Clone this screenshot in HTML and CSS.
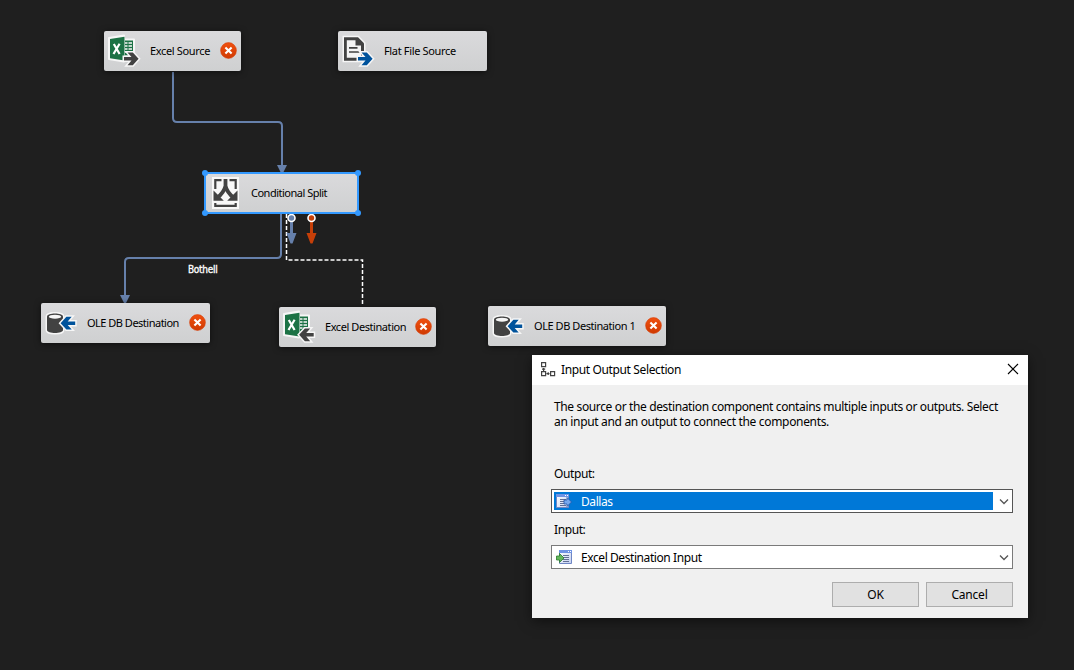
FILE: index.html
```html
<!DOCTYPE html>
<html lang="en">
<head>
<meta charset="utf-8">
<title>Data Flow</title>
<link rel="stylesheet" href="styles.css">
</head>
<body>
<svg class="defs" width="0" height="0">
  <defs>
    <linearGradient id="err" x1="0" y1="0" x2="0" y2="1"><stop offset="0" stop-color="#f0500f"/><stop offset="1" stop-color="#cf3a02"/></linearGradient>
    <linearGradient id="paper" x1="0" y1="0" x2="1" y2="1"><stop offset="0" stop-color="#fff"/><stop offset="1" stop-color="#c3d0f0"/></linearGradient>
    <g id="excel">
      <path d="M5 7 20 4.500V8.500H30V25H20V30.500L5 28Z" fill="#f6f6f6" stroke="#f6f6f6" stroke-width="2" stroke-linejoin="round"/>
      <path d="M6 8 20.500 5.700V29.500L6 27.200Z" fill="#1c7245"/>
      <path d="M21 9.500h8v15h-8" fill="#1c7245"/>
      <path d="M21 12h2.500M24.500 12H28M21 15h2.500M24.500 15H28M21 18h2.500M24.500 18H28M21 21h2.500M24.500 21H28" stroke="#f6f6f6" stroke-width="1.700"/>
      <path d="M9.800 13 15.600 23M15.600 12.700 9.500 23" stroke="#fff" stroke-width="2.200" fill="none"/>
    </g>
    <path id="arrow-r" d="M20 26H27.500L23.500 21.400H28.800L34.600 27.800 28.800 34.200H23.500L27.500 29.600H20Z" stroke-width="3" paint-order="stroke" stroke="#f6f6f6"/>
    <path id="arrow-l" d="M34.200 26H26.700L30.700 21.400H25.400L19.600 27.800 25.400 34.200H30.700L26.700 29.600H34.200Z" stroke-width="3" paint-order="stroke" stroke="#f6f6f6"/>
    <g id="database">
      <path d="M6 13.500C6 9.500 22 9.500 22 13.500V27C22 31 6 31 6 27Z" fill="#424242" stroke="#f6f6f6" stroke-width="3" paint-order="stroke"/>
      <ellipse cx="14" cy="13.700" rx="6.200" ry="2" fill="#f6f6f6"/>
      <use href="#arrow-l" y="-7.600" fill="#00539c"/>
    </g>
    <g id="error"><circle cx="8.500" cy="8.500" r="7.900" fill="url(#err)" stroke="#d9420e" stroke-width=".6"/><path d="m5.400 5.400 6.200 6.200m0-6.200-6.200 6.200" stroke="#fff" stroke-width="2.100"/></g>
    <path id="chevron" d="m1 1.500 4 4 4-4" fill="none" stroke="#555" stroke-width="1.300"/>
    <g id="form">
      <path d="M.5.500h12v13H.5Z" fill="url(#paper)" stroke="#6f86c4"/>
      <path d="M0 0h13v3H0Z" fill="#6f93e4"/><path d="M9 1h1v1H9zM11 1h1v1h-1z" fill="#fff"/>
      <path d="M4 5.500h6M4 7.500h6M4 9.500h6M4 11.500h6" stroke="#55628a" stroke-width=".9"/>
    </g>
  </defs>
</svg>

<main class="canvas">
  <svg class="wires" width="1074" height="670">
    <g fill="none" stroke="#6680ab" stroke-width="2">
      <path d="M173 72V118Q173 122 177 122H278Q282 122 282 126V166"/>
      <path d="M281 213V254Q281 258 277 258H129Q125 258 125 262V296"/>
    </g>
    <path d="M277 165h10l-4 8h-2zM120 295h10l-4 8h-2z" fill="#6680ab"/>
    <path d="M286.500 214V260H362.500V305" fill="none" stroke="#fff" stroke-width="1.500" stroke-dasharray="4 2"/>
    <path d="M290 218h3v15h3.500l-4 10.500h-2l-4-10.500h3.500z" fill="#6680ab"/>
    <path d="M310 218h3v15h3.500l-4 10.500h-2l-4-10.500h3.500z" fill="#c63f08"/>
    <circle cx="291.500" cy="218" r="3.500" fill="#6680ab" stroke="#fff" stroke-width="1.600"/>
    <circle cx="311.500" cy="218" r="3.500" fill="#c63f08" stroke="#fff" stroke-width="1.600"/>
  </svg>
  <span class="wire-label">Bothell</span>

  <div class="node excel-source">
    <svg class="icon" width="40" height="40"><use href="#excel"/><use href="#arrow-r" fill="#424242"/></svg>
    <span class="name">Excel Source</span>
    <svg class="status" width="17" height="17"><use href="#error"/></svg>
  </div>
  <div class="node flat-source">
    <svg class="icon" width="40" height="40">
      <path d="M6 6.300H20L26 12.300V29.700H6Z" fill="#424242" stroke="#f6f6f6" stroke-width="3" paint-order="stroke"/>
      <path d="M8.800 9.200H17.500V14.500H23V26.800H8.800Z" fill="#f4f4f4"/>
      <path d="M11 16.800h8.500M11 21h10.500" stroke="#424242" stroke-width="1.700"/>
      <use href="#arrow-r" fill="#00539c"/>
    </svg>
    <span class="name">Flat File Source</span>
  </div>
  <div class="node split">
    <svg class="icon" width="40" height="40">
      <path d="M7 4h27v32H7Z" fill="#f8f8f8"/>
      <path d="M10.300 16V7.200H16.500M24.500 7.200H30.700V16M10.300 30V32.800H30.700V30" fill="none" stroke="#424242" stroke-width="2.200"/>
      <path d="M20.500 6V13Q19 19.500 12 25M20.500 13Q22 19.500 29 25" fill="none" stroke="#424242" stroke-width="3.800"/>
      <path d="M8.500 17.500 18.800 27.800H8.500ZM32.500 17.500 22.200 27.800H32.500Z" fill="#424242"/>
    </svg>
    <span class="name">Conditional Split</span>
    <i class="grip tl"></i><i class="grip tr"></i><i class="grip bl"></i><i class="grip br"></i>
  </div>
  <div class="node ole-one">
    <svg class="icon" width="40" height="40"><use href="#database"/></svg>
    <span class="name">OLE DB Destination</span>
    <svg class="status" width="17" height="17"><use href="#error"/></svg>
  </div>
  <div class="node excel-dest">
    <svg class="icon" width="40" height="40"><use href="#excel"/><use href="#arrow-l" x=".5" fill="#424242"/></svg>
    <span class="name">Excel Destination</span>
    <svg class="status" width="17" height="17"><use href="#error"/></svg>
  </div>
  <div class="node ole-two">
    <svg class="icon" width="40" height="40"><use href="#database"/></svg>
    <span class="name">OLE DB Destination 1</span>
    <svg class="status" width="17" height="17"><use href="#error"/></svg>
  </div>

  <section class="dialog">
    <header class="titlebar">
      <svg width="16" height="16" fill="none" stroke="#424242" stroke-width="1.200"><path d="M1.600 1.600h4v4h-4zM1.600 10.600h4v4h-4zM10.600 10.600h4v4h-4zM3.600 7v3.500M2 8.200h3.200M6.500 12.600h3M8.200 11.200v2.800"/></svg>
      <h1>Input Output Selection</h1>
      <svg width="12" height="12" class="close"><path d="m1 1 10 10M11 1 1 11" stroke="#000" stroke-width="1.100"/></svg>
    </header>
    <div class="content">
      <p class="message"><span class="line-one">The source or the destination component contains multiple inputs or outputs. Select</span><br><span class="line-two">an input and an output to connect the components.</span></p>
      <label class="label">Output:</label>
      <div class="combo active">
        <div class="value">
          <svg width="17" height="15"><use href="#form"/><path d="M8 6h3V3.500L15.500 8 11 12.500V10H8z" fill="#78a9ef" stroke="#2454a5" stroke-width=".8"/></svg>
          <span class="dallas">Dallas</span>
        </div>
        <svg class="drop" width="10" height="7"><use href="#chevron"/></svg>
      </div>
      <label class="label">Input:</label>
      <div class="combo">
        <div class="value">
          <svg width="17" height="15"><use href="#form" x="3"/><path d="M.5 6h3V3.500L8 8l-4.500 4.500V10h-3z" fill="#65b85c" stroke="#287a2b" stroke-width=".8"/></svg>
          <span class="dest-input">Excel Destination Input</span>
        </div>
        <svg class="drop" width="10" height="7"><use href="#chevron"/></svg>
      </div>
      <div class="buttons"><button>OK</button><button>Cancel</button></div>
    </div>
  </section>
</main>
</body>
</html>
```

FILE: styles.css
```css
* { box-sizing: border-box; }
body { margin: 0; }
.defs { position: absolute; }
.canvas {
  position: relative;
  width: 1074px;
  height: 670px;
  overflow: hidden;
  background: #1f1f1f;
  color: #000;
  font-family: "Noto Sans", "Open Sans", sans-serif;
  font-size: 12px;
}
.wires { position: absolute; left: 0; top: 0; }
.wire-label {
  position: absolute;
  left: 188px;
  top: 263px;
  color: #fff;
  font: 500 10px/14px "DejaVu Sans Condensed", "DejaVu Sans", sans-serif;
  letter-spacing: -0.3px;
  -webkit-text-stroke: 0.3px #fff;
}
.node {
  position: absolute;
  display: flex;
  align-items: center;
  height: 40px;
  border-radius: 2px;
  background: linear-gradient(#dadadc, #cfd0d1);
  box-shadow: 0 1px 6px rgba(0, 0, 0, .55);
  font: 11px/14px "Noto Sans", sans-serif;
  letter-spacing: -0.34px;
  white-space: nowrap;
}
.icon { flex: none; margin-right: 6px; }
.status { margin: 0 4px 1px auto; }
.excel-source { left: 104px; top: 31px; width: 137px; }
.flat-source { left: 338px; top: 31px; width: 149px; }
.split {
  left: 205px;
  top: 173px;
  width: 153px;
  box-shadow: 0 0 0 1px #3399ff, inset 0 0 0 1px #3399ff;
  letter-spacing: -0.5px;
}
.ole-one { left: 41px; top: 303px; width: 169px; letter-spacing: -0.5px; }
.excel-dest { left: 279px; top: 307px; width: 157px; letter-spacing: -0.43px; }
.ole-two { left: 488px; top: 306px; width: 178px; letter-spacing: -0.44px; }
.grip {
  position: absolute;
  width: 6px;
  height: 6px;
  border-radius: 50%;
  background: #3399ff;
}
.tl { left: -3px; top: -3px; }
.tr { right: -3px; top: -3px; }
.bl { left: -3px; bottom: -3px; }
.br { right: -3px; bottom: -3px; }

.dialog {
  position: absolute;
  left: 532px;
  top: 355px;
  width: 496px;
  height: 263px;
  background: #f0f0f0;
  box-shadow: 0 3px 12px rgba(0, 0, 0, .5);
}
.titlebar {
  display: flex;
  align-items: center;
  height: 30px;
  padding: 0 9px 2px 8px;
  gap: 5px;
  background: #fff;
}
.titlebar h1 {
  margin: 0;
  font-size: 12px;
  font-weight: 400;
  letter-spacing: -0.37px;
  white-space: nowrap;
}
.close { margin-left: auto; }
.content { padding: 14px 15px 0 19px; }
.message { height: 65px; margin: 0 0 0 3px; line-height: 15px; white-space: nowrap; }
.line-one { letter-spacing: -0.365px; }
.line-two { letter-spacing: -0.33px; }
.label { display: block; height: 25px; padding-left: 3px; line-height: 20px; letter-spacing: -0.4px; }
.combo {
  display: flex;
  align-items: center;
  justify-content: space-between;
  height: 24px;
  margin-bottom: 7px;
  padding: 2px 3px 2px 2px;
  border: 1px solid #7a7a7a;
  background: #fff;
}
.combo.active { border-color: #555; }
.value {
  display: flex;
  align-items: center;
  width: 439px;
  height: 18px;
  padding-left: 2px;
  gap: 8px;
  letter-spacing: -0.42px;
}
.active .value { background: #0078d7; color: #fff; }
.buttons { display: flex; justify-content: flex-end; gap: 7px; padding-top: 6px; }
.buttons button {
  width: 87px;
  height: 25px;
  padding: 0;
  border: 1px solid #adadad;
  background: #e1e1e1;
  color: #000;
  font: 12px "Noto Sans", sans-serif;
  letter-spacing: -0.2px;
}
```
